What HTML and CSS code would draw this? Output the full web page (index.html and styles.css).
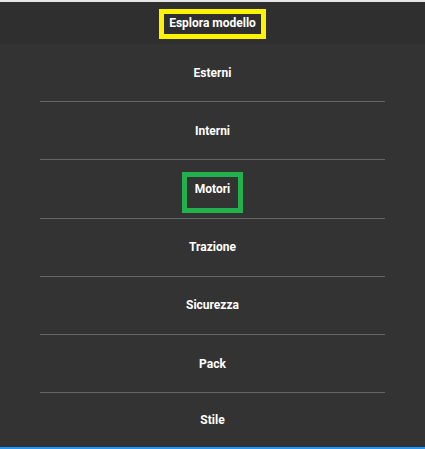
FILE: index.html
```html
<!DOCTYPE html>
<html lang="it">
<head>
<meta charset="utf-8">
<title>Esplora modello</title>
<link rel="stylesheet" href="styles.css">
</head>
<body>
<div class="topstrip"></div>
<header class="header">
  <span class="title mark-yellow">Esplora modello</span>
</header>
<nav class="menu">
  <div class="item"><span>Esterni</span></div>
  <div class="item"><span>Interni</span></div>
  <div class="item"><span class="mark-green">Motori</span></div>
  <div class="item"><span>Trazione</span></div>
  <div class="item"><span>Sicurezza</span></div>
  <div class="item"><span>Pack</span></div>
  <div class="item last"><span>Stile</span></div>
</nav>
<div class="bluebar"></div>
</body>
</html>
```
FILE: styles.css
```css
* { box-sizing: border-box; }
html, body {
  margin: 0;
  padding: 0;
  height: 449px;
  overflow: hidden;
  background: #333333;
  font-family: Roboto, "Liberation Sans", Arial, sans-serif;
  font-weight: 700;
  font-size: 12px;
  color: #ffffff;
}
.topstrip {
  height: 2px;
  background: #e6e6e6;
}
.header {
  height: 42px;
  background: #2f2f2f;
  display: flex;
  align-items: center;
  justify-content: center;
  padding-top: 2px;
}
.mark-yellow {
  display: inline-block;
  border: 5px solid #fff200;
  padding: 2px 5px 4px;
  line-height: 14px;
}
.menu {
  display: flex;
  flex-direction: column;
}
.item {
  height: 58.2px;
  border-bottom: 1px solid #666666;
  margin: 0 40px;
  display: flex;
  align-items: center;
  justify-content: center;
  line-height: 14px;
}
.item.last {
  border-bottom: none;
  height: 54px;
}
.mark-green {
  display: inline-block;
  border: 5px solid #22b14c;
  padding: 5px 8px 12px;
  line-height: 14px;
  margin-top: 8px;
}
.bluebar {
  height: 3px;
  background: #2196f3;
}
```
